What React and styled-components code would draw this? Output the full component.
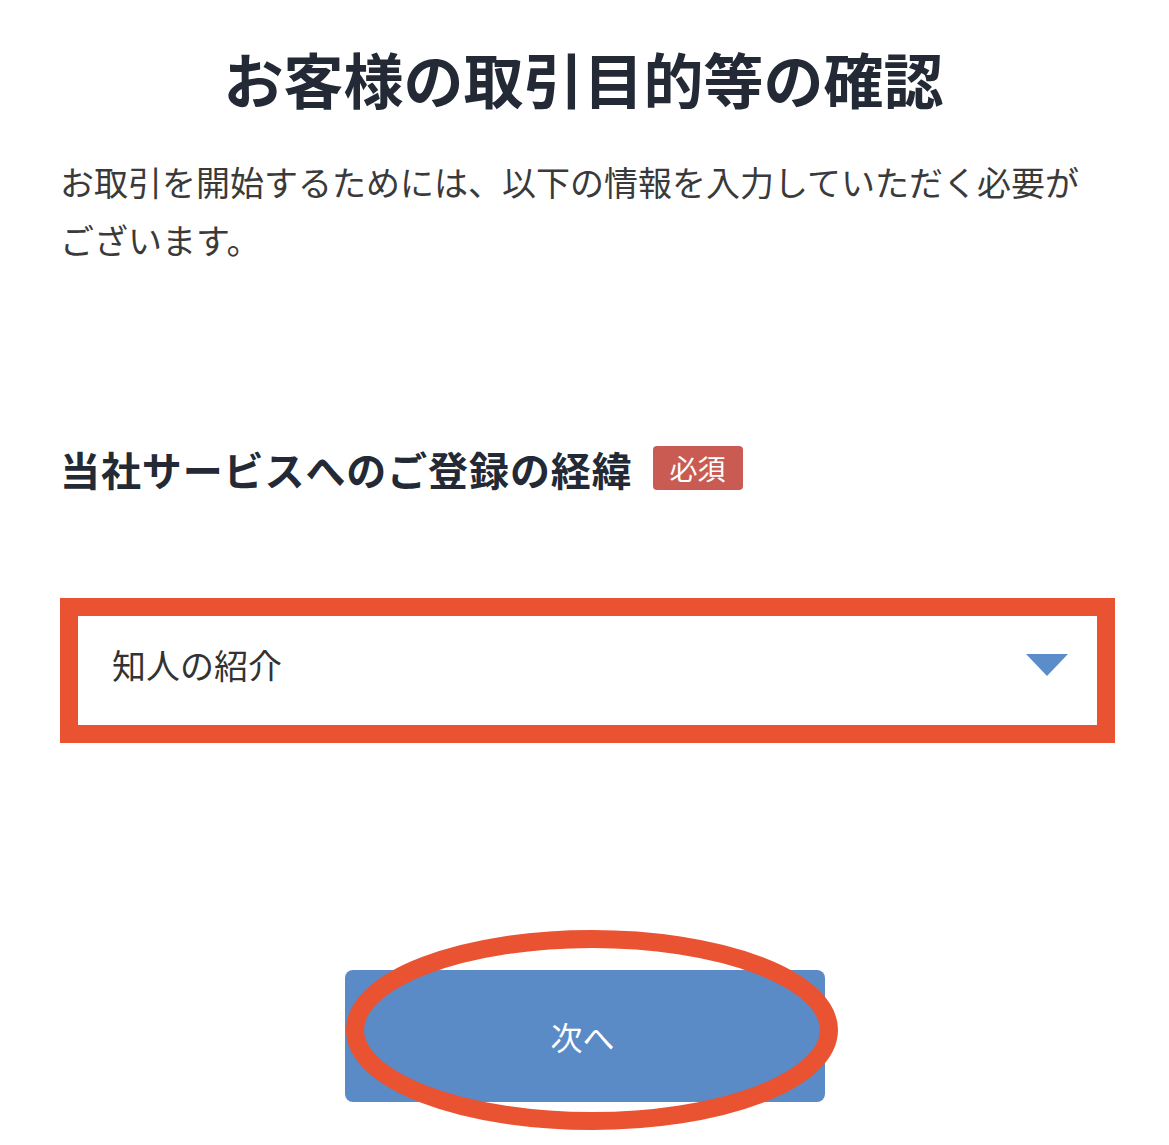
import styled, { createGlobalStyle } from "styled-components";

const GlobalStyle = createGlobalStyle`
  html, body {
    margin: 0;
    padding: 0;
    background: #ffffff;
  }
  body {
    font-family: "Noto Sans CJK JP", "Noto Sans", sans-serif;
    color: #333333;
  }
`;

const Page = styled.main`
  width: 1169px;
  min-height: 1145px;
  box-sizing: border-box;
  padding: 42px 54px 0 60px;
  display: flex;
  flex-direction: column;
  background: #ffffff;
`;

const Title = styled.h1`
  margin: 0;
  font-size: 60px;
  line-height: 72px;
  font-weight: 700;
  color: #232a36;
  text-align: center;
  letter-spacing: 0;
  padding-right: 8px;
`;

const Lead = styled.p`
  margin: 39px 0 0 0;
  font-size: 34px;
  line-height: 58px;
  font-weight: 400;
  color: #3a3a3a;
  letter-spacing: 0;
`;

const FieldLabel = styled.div`
  margin: 172px 0 0 0;
  display: flex;
  align-items: center;
  gap: 20px;
  height: 56px;
`;

const LabelText = styled.h2`
  margin: 0;
  font-size: 40px;
  line-height: 56px;
  font-weight: 700;
  color: #232a36;
  letter-spacing: 0.9px;
`;

const Badge = styled.span`
  display: inline-flex;
  align-items: center;
  justify-content: center;
  width: 90px;
  height: 44px;
  border-radius: 4px;
  background: #c95b52;
  color: #ffffff;
  font-size: 28px;
  font-weight: 400;
  margin-top: -2px;
`;

const Select = styled.div`
  margin-top: 101px;
  height: 145px;
  box-sizing: border-box;
  border: 18px solid #e95332;
  background: #ffffff;
  display: flex;
  align-items: center;
  justify-content: space-between;
  padding: 0 29px 0 34px;
`;

const SelectValue = styled.span`
  font-size: 34px;
  line-height: 40px;
  color: #333333;
  margin-top: -12px;
`;

const Caret = styled.svg`
  width: 42px;
  height: 22px;
  margin-top: -12px;
  display: block;
`;

const ButtonArea = styled.div`
  position: relative;
  margin-top: 227px;
  display: flex;
  justify-content: center;
  margin-left: -60px;
  margin-right: -54px;
`;

const NextButton = styled.button`
  width: 480px;
  height: 132px;
  border: none;
  border-radius: 8px;
  background: #5a8bc6;
  color: #ffffff;
  font-family: "Noto Sans CJK JP", "Noto Sans", sans-serif;
  font-size: 32px;
  font-weight: 400;
  cursor: pointer;
  padding: 0 4px 0 0;
`;

const Ring = styled.svg`
  position: absolute;
  left: 330px;
  top: -50px;
  width: 530px;
  height: 220px;
  pointer-events: none;
  overflow: visible;
`;

export default function App() {
  return (
    <>
      <GlobalStyle />
      <Page>
        <Title>お客様の取引目的等の確認</Title>
        <Lead>
          お取引を開始するためには、以下の情報を入力していただく必要が
          <br />
          ございます。
        </Lead>

        <FieldLabel>
          <LabelText>当社サービスへのご登録の経緯</LabelText>
          <Badge>必須</Badge>
        </FieldLabel>

        <Select>
          <SelectValue>知人の紹介</SelectValue>
          <Caret viewBox="0 0 42 22">
            <polygon points="0,0 42,0 21,22" fill="#5b8dcb" />
          </Caret>
        </Select>

        <ButtonArea>
          <NextButton type="button">次へ</NextButton>
          <Ring viewBox="0 0 530 220">
            <ellipse
              cx="262"
              cy="110"
              rx="237"
              ry="91"
              fill="none"
              stroke="#e95332"
              strokeWidth="18"
            />
          </Ring>
        </ButtonArea>
      </Page>
    </>
  );
}
